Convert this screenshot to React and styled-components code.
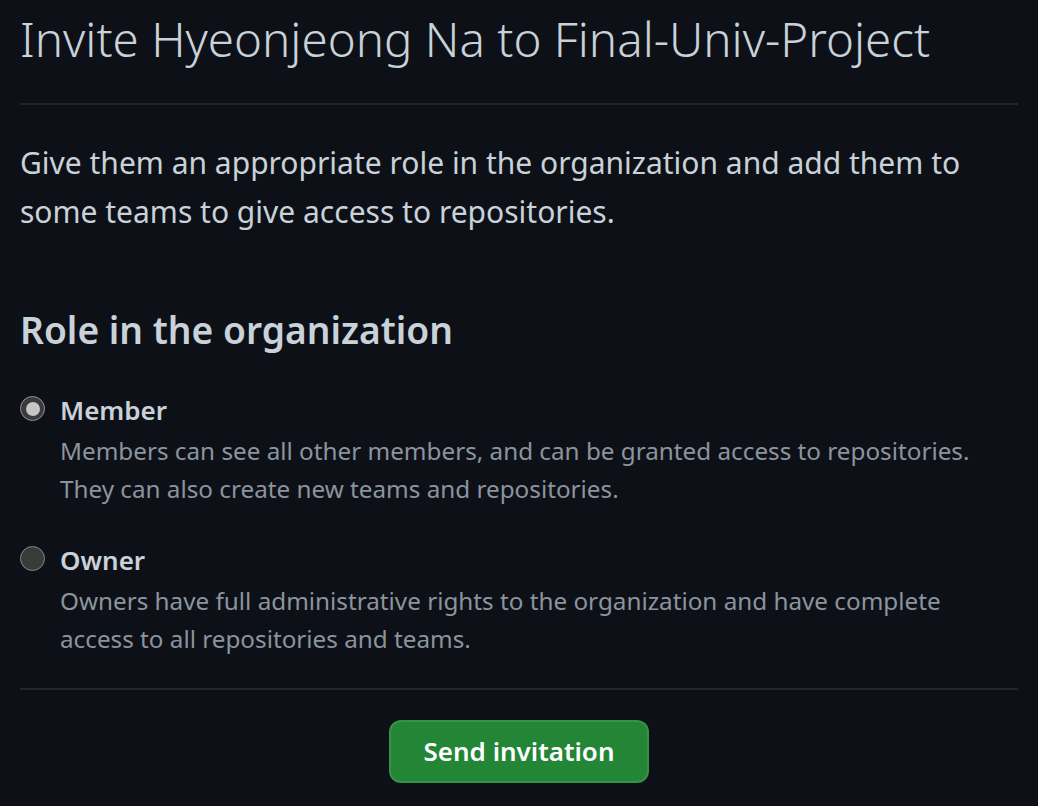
import React, { useState } from 'react'
import styled, { createGlobalStyle } from 'styled-components'

const GlobalStyle = createGlobalStyle`
  html, body {
    margin: 0;
    padding: 0;
    background: #0d1117;
  }
  body {
    font-family: "Noto Sans", "Liberation Sans", sans-serif;
    color: #c9d1d9;
  }
`

const roles = [
  {
    id: 'member',
    label: 'Member',
    text: 'Members can see all other members, and can be granted access to repositories. They can also create new teams and repositories.',
  },
  {
    id: 'owner',
    label: 'Owner',
    text: 'Owners have full administrative rights to the organization and have complete access to all repositories and teams.',
  },
]

export default function App() {
  const [role, setRole] = useState('member')
  return (
    <Page>
      <GlobalStyle />
      <Subhead>
        <h1>Invite Hyeonjeong Na to Final-Univ-Project</h1>
      </Subhead>
      <Lead>
        Give them an appropriate role in the organization and add them to
        some teams to give access to repositories.
      </Lead>
      <SectionTitle>Role in the organization</SectionTitle>
      <RoleList>
        {roles.map((r) => (
          <RoleItem key={r.id} onClick={() => setRole(r.id)}>
            <Radio checked={role === r.id} />
            <div>
              <RoleLabel>{r.label}</RoleLabel>
              <RoleNote>{r.text}</RoleNote>
            </div>
          </RoleItem>
        ))}
      </RoleList>
      <Footer>
        <SendButton type="button">Send invitation</SendButton>
      </Footer>
    </Page>
  )
}

const Page = styled.div`
  padding: 0 20px;
  min-height: 806px;
  box-sizing: border-box;
`

const Subhead = styled.div`
  border-bottom: 2px solid #21262d;
  padding: 3px 0 28px;
  h1 {
    margin: 0;
    font-size: 47.5px;
    font-weight: 300;
    line-height: 72px;
    color: #c9d1d9;
  }
`

const Lead = styled.p`
  margin: 34px 0 0;
  font-size: 30px;
  line-height: 48.5px;
  color: #c9d1d9;
  max-width: 960px;
`

const SectionTitle = styled.h2`
  margin: 63.5px 0 0;
  font-size: 37.2px;
  font-weight: 600;
  line-height: 60px;
  color: #c9d1d9;
`

const RoleList = styled.div`
  display: flex;
  flex-direction: column;
  gap: 32px;
  margin-top: 30px;
  padding-bottom: 30px;
  border-bottom: 2px solid #21262d;
`

const RoleItem = styled.label`
  display: flex;
  gap: 15px;
  cursor: pointer;
`

const Radio = styled.span`
  flex: none;
  box-sizing: border-box;
  width: 25px;
  height: 25px;
  margin-top: 6.5px;
  border-radius: 50%;
  background: #3b3b3b;
  border: 1.5px solid ${(p) => (p.checked ? '#929292' : '#858585')};
  display: grid;
  place-items: center;
  &::after {
    content: '';
    width: 14px;
    height: 14px;
    border-radius: 50%;
    background: #c6c6c6;
    display: ${(p) => (p.checked ? 'block' : 'none')};
  }
`

const RoleLabel = styled.div`
  font-size: 26px;
  font-weight: 600;
  line-height: 40px;
  color: #c9d1d9;
`

const RoleNote = styled.p`
  margin: 2px 0 0;
  font-size: 24.25px;
  line-height: 38px;
  color: #8b949e;
  max-width: 940px;
`

const Footer = styled.div`
  display: flex;
  justify-content: center;
  padding-top: 30px;
`

const SendButton = styled.button`
  width: 260px;
  height: 63px;
  border-radius: 12px;
  border: 2px solid rgba(240, 246, 252, 0.1);
  background: #238636;
  color: #ffffff;
  font-family: "Noto Sans", "Liberation Sans", sans-serif;
  font-size: 26px;
  font-weight: 600;
  cursor: pointer;
`
